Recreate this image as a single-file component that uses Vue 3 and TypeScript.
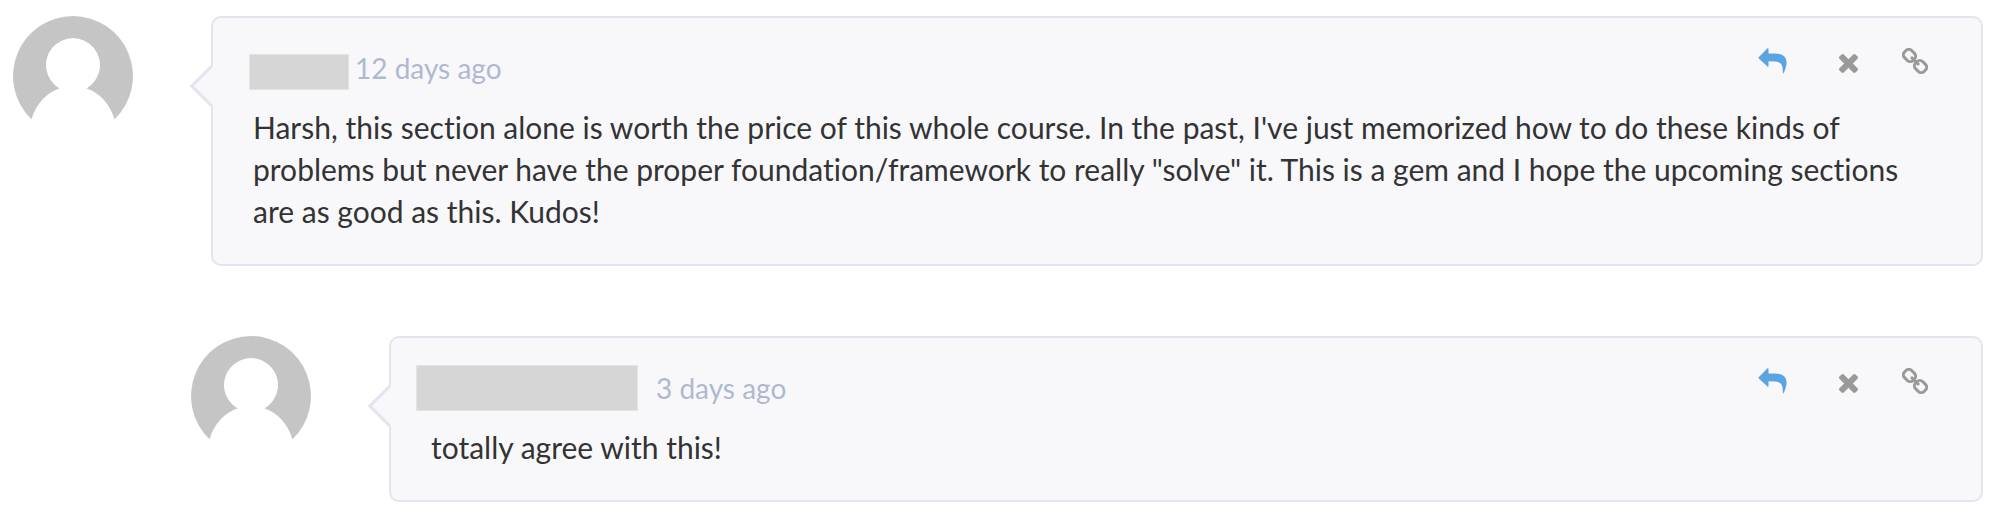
<script setup lang="ts">
interface Comment {
  id: number
  age: string
  text: string
  reply: boolean
}

const comments: Comment[] = [
  {
    id: 1,
    age: '12 days ago',
    text: 'Harsh, this section alone is worth the price of this whole course. In the past, I\'ve just memorized how to do these kinds of problems but never have the proper foundation/framework to really "solve" it. This is a gem and I hope the upcoming sections are as good as this. Kudos!',
    reply: false,
  },
  { id: 2, age: '3 days ago', text: 'totally agree with this!', reply: true },
]
</script>

<template>
  <main class="thread">
    <article v-for="c in comments" :key="c.id" class="comment" :class="{ reply: c.reply }">
      <svg class="avatar" viewBox="0 0 120 120" aria-hidden="true">
        <path fill="#c5c5c5" d="M60 0A60 60 0 0 1 101.500 103.300C97 88 86 76 73.500 72.500A27 27 0 1 0 46.500 72.500C34 76 23 88 18.500 103.300A60 60 0 0 1 60 0Z" />
      </svg>
      <section class="card">
        <header class="head">
          <span class="name"></span>
          <time class="age">{{ c.age }}</time>
          <div class="actions">
            <button type="button" class="action primary" aria-label="Reply">
              <svg class="icon" viewBox="0 0 30 26">
                <path fill="currentColor" d="M0.500 9.500L9.500 0.300Q10.500 0 10.500 1V5.500H17C26 5.500 29 10 28.500 15.500C28.300 19 27 22.500 25.300 25.500Q24.800 26 24.800 25C25 17 23.500 14 17 13.500L10.500 13.200V18Q10.500 19 9.500 18.600L0.500 10.200Q0 9.900 0.500 9.500Z" />
              </svg>
            </button>
            <button type="button" class="action" aria-label="Delete">
              <svg class="icon cross" viewBox="110 366 1188 1188">
                <path fill="currentColor" d="M1298 1322q0 40-28 68l-136 136q-28 28-68 28t-68-28l-294-294-294 294q-28 28-68 28t-68-28l-136-136q-28-28-28-68t28-68l294-294-294-294q-28-28-28-68t28-68l136-136q28-28 68-28t68 28l294 294 294-294q28-28 68-28t68 28l136 136q28 28 28 68t-28 68l-294 294 294 294q28 28 28 68z" />
              </svg>
            </button>
            <a href="#" class="action" aria-label="Permalink">
              <svg class="icon" viewBox="0 0 26 26" fill="none" stroke="currentColor" stroke-width="3">
                <rect x="1.500" y="2.500" width="12" height="10" rx="4" transform="rotate(45 7.500 7.500)" />
                <rect x="12.500" y="13.500" width="12" height="10" rx="4" transform="rotate(45 18.500 18.500)" />
                <path d="M9 9L17 17" />
              </svg>
            </a>
          </div>
        </header>
        <p class="text">{{ c.text }}</p>
      </section>
    </article>
  </main>
</template>

<style>
body {
  margin: 0;
  background: #fff;
}
</style>

<style scoped>
.thread {
  display: flex;
  flex-direction: column;
  gap: 70px;
  padding: 16px 14px 14px 13px;
  font-family: Lato, "Liberation Sans", sans-serif;
  font-size: 30px;
  font-variant-ligatures: none;
  line-height: 42px;
  color: #333;
}

.comment {
  display: flex;
  align-items: flex-start;
  gap: 78px;
}

.reply {
  margin-left: 178px;
}

.avatar {
  flex: none;
  width: 120px;
  height: 120px;
}

.card {
  position: relative;
  flex: 1;
  min-width: 0;
  box-sizing: border-box;
  padding: 30px 40px 32px;
  background: #f8f8fb;
  border: 2px solid #e2e5f0;
  border-radius: 10px;
}

.card::before {
  content: "";
  position: absolute;
  top: 53px;
  left: -17px;
  width: 30px;
  height: 30px;
  box-sizing: border-box;
  background: #f8f8fb;
  border: solid #e2e5f0;
  border-width: 0 0 3px 3px;
  transform: rotate(45deg);
}

.head {
  display: flex;
  height: 58px;
}

.name {
  width: 98px;
  height: 34px;
  margin: 6px 6px 0 -4px;
  background: #d6d6d6;
  border: 1px solid #e3e3e3;
}

.reply .name {
  width: 220px;
  height: 44px;
  margin: -3px 18px 0 -15px;
}

.age {
  color: #b0b8d1;
  font-size: 28px;
  line-height: 40px;
}

.actions {
  display: flex;
  align-items: center;
  height: 26px;
  margin-left: auto;
  margin-right: 13px;
  gap: 44px;
}

.action {
  display: flex;
  align-items: center;
  justify-content: center;
  padding: 0;
  color: #999;
  background: none;
  border: 0;
  cursor: pointer;
}

.primary {
  margin-right: 7px;
  color: #5aa4e2;
}

.icon {
  height: 26px;
}

.cross {
  width: 19px;
  height: 19px;
  margin-top: 4px;
}

.text {
  margin: 0;
}
</style>
